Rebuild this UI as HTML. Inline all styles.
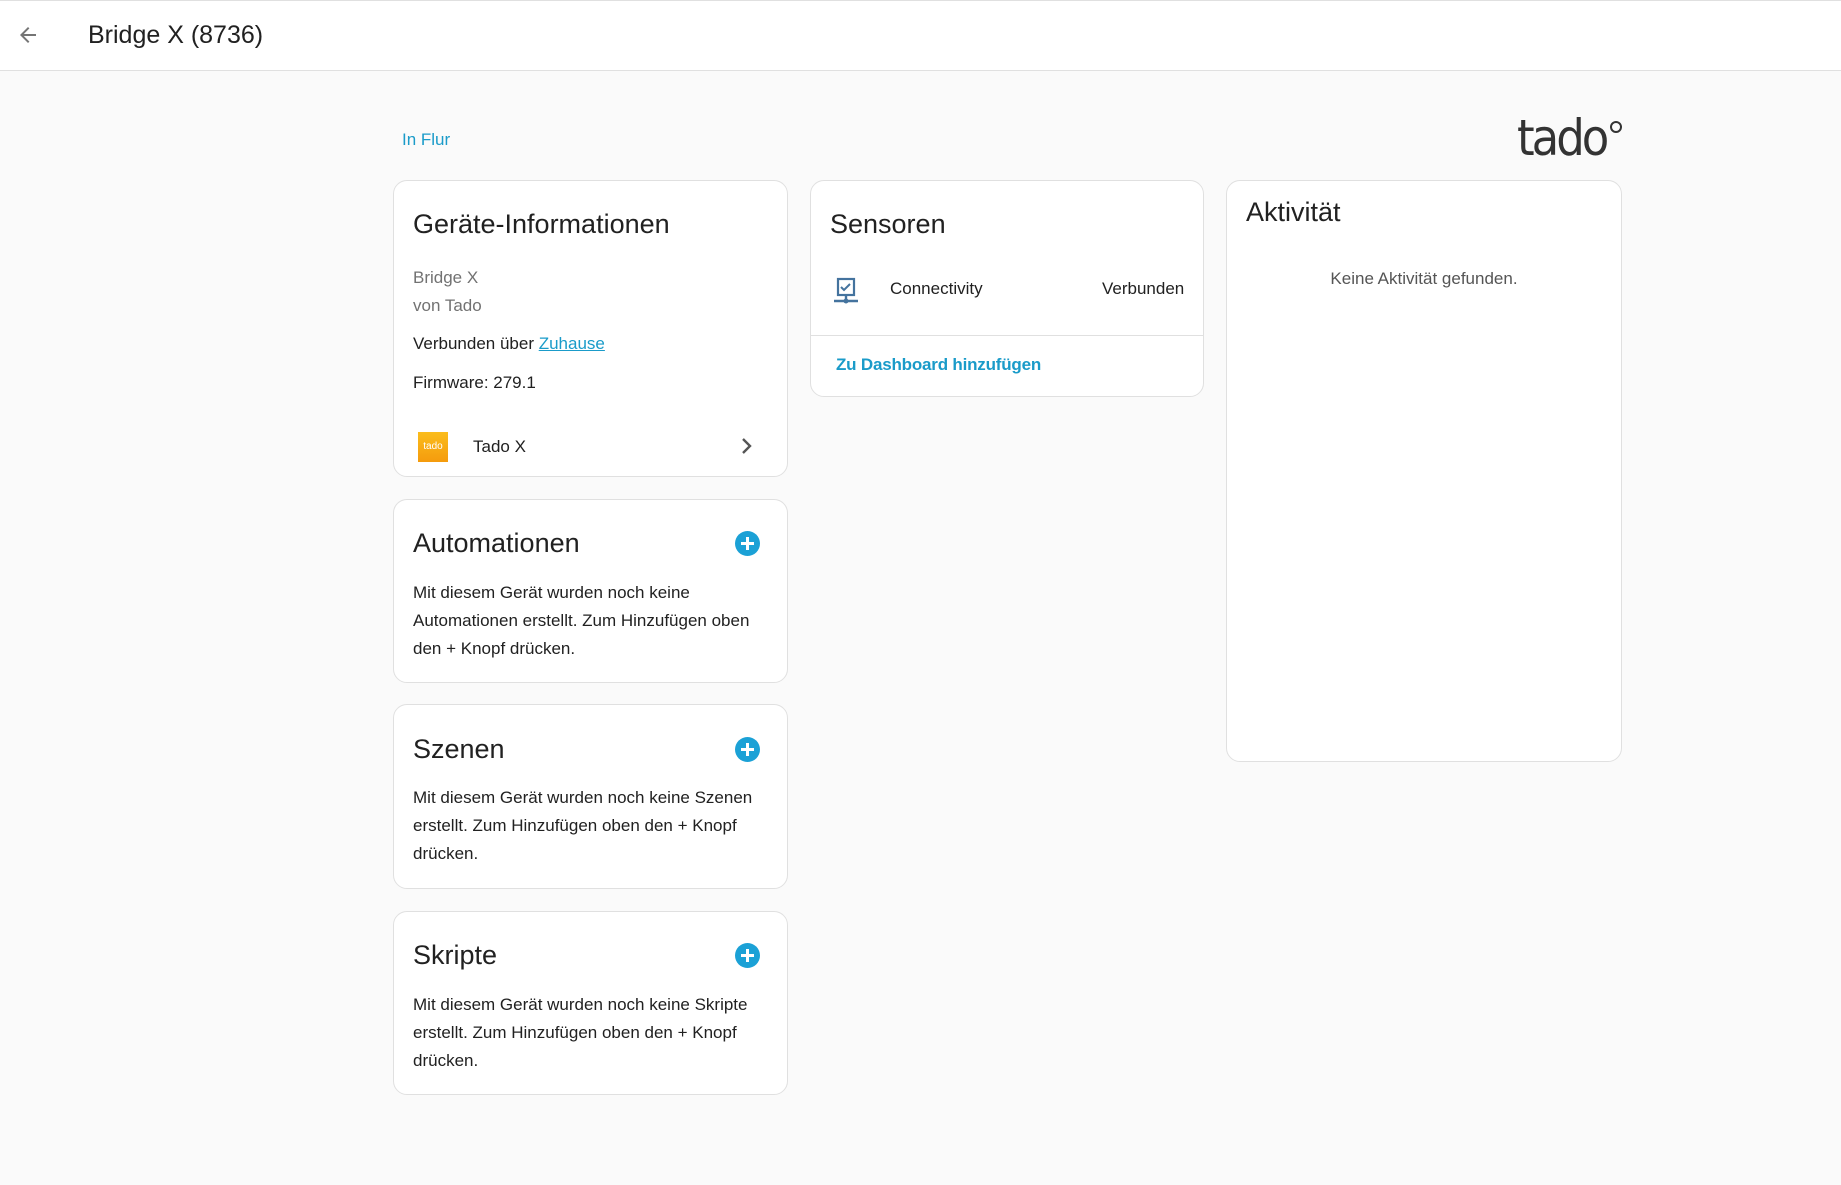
<!DOCTYPE html>
<html><head><meta charset="utf-8"><style>
*{margin:0;padding:0;box-sizing:border-box}
body{width:1841px;height:1185px;background:#fafafa;font-family:"Liberation Sans",Arial,sans-serif;color:#212121;position:relative;overflow:hidden}
.a{position:absolute;white-space:nowrap}
.hdr{position:absolute;left:0;top:0;width:1841px;height:71px;background:#fff;border-top:1px solid #e0e0e0;border-bottom:1px solid #e0e0e0}
.card{position:absolute;background:#fff;border:1px solid #e0e0e0;border-radius:14px}
.t{font-size:27px;line-height:34px;color:#212121}
.b{font-size:17px;line-height:28px}
.plus{position:absolute;width:25px;height:25px;border-radius:50%;background:#1ba1d6}
.plus:before{content:"";position:absolute;left:6px;top:11px;width:13px;height:3px;background:#fff}
.plus:after{content:"";position:absolute;left:11px;top:6px;width:3px;height:13px;background:#fff}
</style></head><body>
<div class="hdr"></div>
<svg class="a" style="left:16px;top:23px" width="24" height="24" viewBox="0 0 24 24"><path d="M20 11H7.8l5.6-5.6L12 4l-8 8 8 8 1.4-1.4L7.8 13H20z" fill="#757575"/></svg>
<div class="a" style="left:88px;top:19px;font-size:25px;line-height:32px;color:#212121">Bridge X (8736)</div>

<div class="a" style="left:402px;top:129px;font-size:17px;line-height:22px;color:#1a9bc9">In Flur</div>
<div class="a" style="left:1517px;top:110px;font-size:50px;line-height:56px;color:#333;letter-spacing:-3px;font-family:'DejaVu Sans Condensed','Liberation Sans Narrow',sans-serif">tado</div>
<div class="a" style="left:1610px;top:121px;width:12px;height:12px;border:2px solid #333;border-radius:50%"></div>

<div class="card" style="left:393px;top:180px;width:395px;height:297px"></div>
<div class="a t" style="left:413px;top:207px">Geräte-Informationen</div>
<div class="a b" style="left:413px;top:264px;color:#727272">Bridge X</div>
<div class="a b" style="left:413px;top:292px;color:#727272">von Tado</div>
<div class="a b" style="left:413px;top:330px">Verbunden über <span style="color:#1a9bc9;text-decoration:underline">Zuhause</span></div>
<div class="a b" style="left:413px;top:369px">Firmware: 279.1</div>
<div class="a" style="left:418px;top:432px;width:30px;height:30px;background:linear-gradient(#fbbd1c,#f59b0d);color:#fff;font-size:10px;line-height:30px;text-align:center">tado</div>
<div class="a b" style="left:473px;top:433px">Tado X</div>
<svg class="a" style="left:740px;top:437px" width="14" height="18" viewBox="0 0 14 18"><path d="M3 2l7 7-7 7" stroke="#555" stroke-width="2.4" fill="none"/></svg>

<div class="card" style="left:393px;top:499px;width:395px;height:184px"></div>
<div class="a t" style="left:413px;top:526px">Automationen</div>
<div class="plus" style="left:735px;top:531px"></div>
<div class="a b" style="left:413px;top:579px">Mit diesem Gerät wurden noch keine<br>Automationen erstellt. Zum Hinzufügen oben<br>den + Knopf drücken.</div>

<div class="card" style="left:393px;top:704px;width:395px;height:185px"></div>
<div class="a t" style="left:413px;top:732px">Szenen</div>
<div class="plus" style="left:735px;top:737px"></div>
<div class="a b" style="left:413px;top:784px">Mit diesem Gerät wurden noch keine Szenen<br>erstellt. Zum Hinzufügen oben den + Knopf<br>drücken.</div>

<div class="card" style="left:393px;top:911px;width:395px;height:184px"></div>
<div class="a t" style="left:413px;top:938px">Skripte</div>
<div class="plus" style="left:735px;top:943px"></div>
<div class="a b" style="left:413px;top:991px">Mit diesem Gerät wurden noch keine Skripte<br>erstellt. Zum Hinzufügen oben den + Knopf<br>drücken.</div>

<div class="card" style="left:810px;top:180px;width:394px;height:217px"></div>
<div class="a t" style="left:830px;top:207px">Sensoren</div>
<svg class="a" style="left:832px;top:277px" width="28" height="28" viewBox="0 0 28 28"><rect x="6" y="2" width="16" height="16" fill="none" stroke="#44739e" stroke-width="2.2"/><path d="M9 10l3 3 6-6" stroke="#44739e" stroke-width="2" fill="none"/><path d="M14 18v6M2 24h24" stroke="#44739e" stroke-width="2.4"/><circle cx="14" cy="24" r="2.5" fill="#44739e"/></svg>
<div class="a b" style="left:890px;top:275px">Connectivity</div>
<div class="a b" style="left:1102px;top:275px">Verbunden</div>
<div class="a" style="left:811px;top:335px;width:392px;height:1px;background:#e0e0e0"></div>
<div class="a" style="left:836px;top:354px;font-size:17px;line-height:22px;color:#1a9bc9;font-weight:bold;letter-spacing:-0.2px">Zu Dashboard hinzufügen</div>

<div class="card" style="left:1226px;top:180px;width:396px;height:582px"></div>
<div class="a t" style="left:1246px;top:195px">Aktivität</div>
<div class="a" style="left:1226px;top:268px;width:396px;text-align:center;font-size:17px;line-height:22px;color:#555">Keine Aktivität gefunden.</div>
</body></html>
